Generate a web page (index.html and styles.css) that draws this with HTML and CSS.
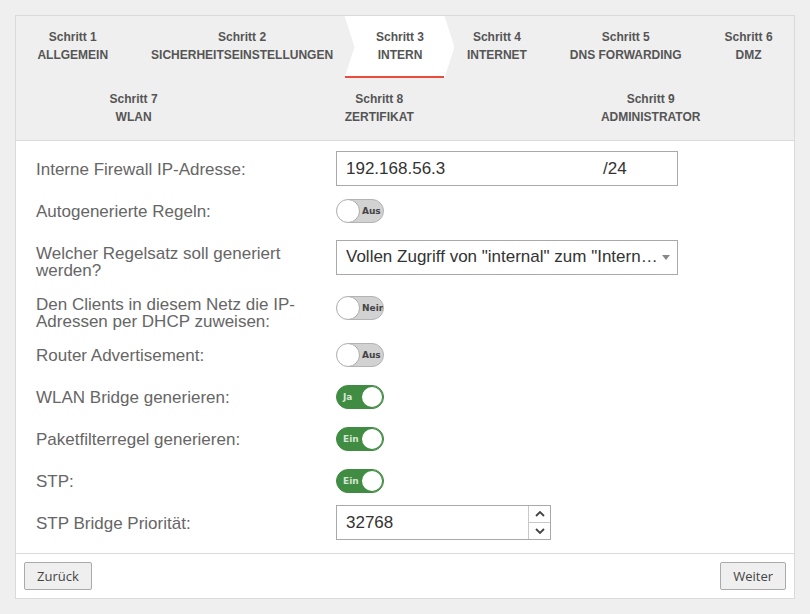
FILE: index.html
```html
<!DOCTYPE html>
<html lang="de">
<head>
<meta charset="UTF-8">
<meta name="viewport" content="width=device-width, initial-scale=1.0">
<title>Assistent - Intern</title>
<link rel="stylesheet" href="styles.css">
</head>
<body>

<div class="wizard">
    <!-- Schritte -->
    <div class="steps">
        <div class="step-row">
            <div class="step"><span>Schritt 1</span><span>ALLGEMEIN</span></div>
            <div class="step"><span>Schritt 2</span><span>SICHERHEITSEINSTELLUNGEN</span></div>
            <div class="step active"><span>Schritt 3</span><span>INTERN</span></div>
            <div class="step"><span>Schritt 4</span><span>INTERNET</span></div>
            <div class="step"><span>Schritt 5</span><span>DNS FORWARDING</span></div>
            <div class="step"><span>Schritt 6</span><span>DMZ</span></div>
        </div>
        <div class="step-row">
            <div class="step"><span>Schritt 7</span><span>WLAN</span></div>
            <div class="step"><span>Schritt 8</span><span>ZERTIFIKAT</span></div>
            <div class="step"><span>Schritt 9</span><span>ADMINISTRATOR</span></div>
        </div>
    </div>

    <!-- Formular -->
    <div class="form-body">
        <div class="form-row">
            <label class="form-label">Interne Firewall IP-Adresse:</label>
            <div class="form-control">
                <div class="text-field ip-field">
                    <span class="ip-value">192.168.56.3</span>
                    <span class="ip-mask">/24</span>
                </div>
            </div>
        </div>

        <div class="form-row">
            <label class="form-label">Autogenerierte Regeln:</label>
            <div class="form-control">
                <div class="toggle"><span class="knob"></span><span class="toggle-text">Aus</span></div>
            </div>
        </div>

        <div class="form-row">
            <label class="form-label">Welcher Regelsatz soll generiert werden?</label>
            <div class="form-control">
                <div class="text-field select-field">
                    <span class="select-value">Vollen Zugriff von "internal" zum "Internet" erlauben</span>
                    <span class="select-arrow"></span>
                </div>
            </div>
        </div>

        <div class="form-row">
            <label class="form-label">Den Clients in diesem Netz die IP-Adressen per DHCP zuweisen:</label>
            <div class="form-control">
                <div class="toggle"><span class="knob"></span><span class="toggle-text">Nein</span></div>
            </div>
        </div>

        <div class="form-row">
            <label class="form-label">Router Advertisement:</label>
            <div class="form-control">
                <div class="toggle"><span class="knob"></span><span class="toggle-text">Aus</span></div>
            </div>
        </div>

        <div class="form-row">
            <label class="form-label">WLAN Bridge generieren:</label>
            <div class="form-control">
                <div class="toggle on"><span class="toggle-text">Ja</span><span class="knob"></span></div>
            </div>
        </div>

        <div class="form-row">
            <label class="form-label">Paketfilterregel generieren:</label>
            <div class="form-control">
                <div class="toggle on"><span class="toggle-text">Ein</span><span class="knob"></span></div>
            </div>
        </div>

        <div class="form-row">
            <label class="form-label">STP:</label>
            <div class="form-control">
                <div class="toggle on"><span class="toggle-text">Ein</span><span class="knob"></span></div>
            </div>
        </div>

        <div class="form-row">
            <label class="form-label">STP Bridge Priorität:</label>
            <div class="form-control">
                <div class="text-field number-field">
                    <span class="number-value">32768</span>
                    <div class="spinner">
                        <span class="spin">
                            <svg width="10" height="6" viewBox="0 0 10 6"><path d="M1 5 L5 1 L9 5" fill="none" stroke="#444" stroke-width="1.8"/></svg>
                        </span>
                        <span class="spin">
                            <svg width="10" height="6" viewBox="0 0 10 6"><path d="M1 1 L5 5 L9 1" fill="none" stroke="#444" stroke-width="1.8"/></svg>
                        </span>
                    </div>
                </div>
            </div>
        </div>
    </div>

    <div class="form-footer">
        <button type="button" class="button">Zurück</button>
        <button type="button" class="button">Weiter</button>
    </div>
</div>

</body>
</html>
```

FILE: styles.css
```css
body {
    margin: 0;
    padding: 15px;
    background-color: #efefef;
    font-family: "Liberation Sans", Arial, sans-serif;
}
.wizard {
    border: 1px solid #dadada;
    background-color: #fff;
}
.steps {
    background-color: #efefef;
    border-bottom: 1px solid #dadada;
}
.step-row {
    display: flex;
}
.step {
    flex: 1 1 auto;
    position: relative;
    z-index: 0;
    display: flex;
    flex-direction: column;
    align-items: center;
    padding: 12px 21px 14px;
    font-size: 12px;
    font-weight: bold;
    line-height: 18px;
    color: #555;
    white-space: nowrap;
}
.step.active::before {
    content: "";
    position: absolute;
    top: 0;
    bottom: 0;
    left: -10px;
    right: -9px;
    z-index: -1;
    background-color: #fff;
    clip-path: polygon(0 0, calc(100% - 10px) 0, 100% 50%, calc(100% - 10px) 100%, 0 100%, 10px 50%);
}
.step.active::after {
    content: "";
    position: absolute;
    bottom: 0;
    left: -10px;
    right: 1px;
    height: 2px;
    background-color: #e74c3c;
}
.form-body {
    padding: 10px 20px 13px;
}
.form-row {
    display: grid;
    grid-template-columns: 300px 342px;
    align-items: start;
    margin-bottom: 7px;
}
.form-row:last-child {
    margin-bottom: 0;
}
.form-label {
    padding: 10px 20px 0 0;
    font-size: 17px;
    line-height: 17px;
    color: #666;
}
.form-control {
    align-self: center;
    display: flex;
    align-items: center;
    min-height: 35px;
}
.text-field {
    box-sizing: border-box;
    display: flex;
    align-items: center;
    height: 35px;
    width: 342px;
    padding: 0 9px;
    border: 1px solid #a9a9a9;
    background-color: #fff;
    font-size: 17px;
    color: #333;
}
.ip-value {
    flex: 1;
}
.ip-mask {
    width: 65px;
}
.select-field {
    padding-right: 7px;
}
.select-value {
    flex: 1;
    overflow: hidden;
    white-space: nowrap;
    text-overflow: ellipsis;
}
.select-arrow {
    margin-left: 2px;
    border-left: 4px solid transparent;
    border-right: 4px solid transparent;
    border-top: 5px solid #888;
}
.number-field {
    width: 215px;
    padding-right: 0;
}
.number-value {
    flex: 1;
}
.spinner {
    display: flex;
    flex-direction: column;
    width: 21px;
    height: 33px;
    border-left: 1px solid #c8c8c8;
}
.spin {
    flex: 1;
    display: flex;
    align-items: center;
    justify-content: center;
}
.spin:first-child {
    border-bottom: 1px solid #c8c8c8;
}
.toggle {
    box-sizing: border-box;
    display: flex;
    align-items: center;
    width: 48px;
    height: 24px;
    border: 1px solid #b3b3b3;
    border-radius: 12px;
    background-color: #d2d2d2;
    overflow: hidden;
}
.knob {
    box-sizing: border-box;
    flex: none;
    width: 24px;
    height: 24px;
    margin: -1px;
    border: 1px solid #aaa;
    border-radius: 50%;
    background-color: #fff;
}
.toggle-text {
    padding-left: 3px;
    font-family: "DejaVu Sans", Verdana, sans-serif;
    font-size: 9px;
    font-weight: bold;
    color: #444;
    white-space: nowrap;
}
.toggle.on {
    background-color: #418c43;
    border-color: #418c43;
}
.toggle.on .toggle-text {
    flex: 1;
    padding-left: 6px;
    color: #d5e6d5;
}
.toggle.on .knob {
    border: 2px solid #418c43;
}
.form-footer {
    display: flex;
    justify-content: space-between;
    padding: 8px;
    border-top: 1px solid #dadada;
}
.button {
    height: 28px;
    padding: 0 12px;
    border: 1px solid #aaa;
    border-radius: 2px;
    background-color: #efefef;
    font-family: "Open Sans", sans-serif;
    font-size: 13px;
    color: #444;
}
```
